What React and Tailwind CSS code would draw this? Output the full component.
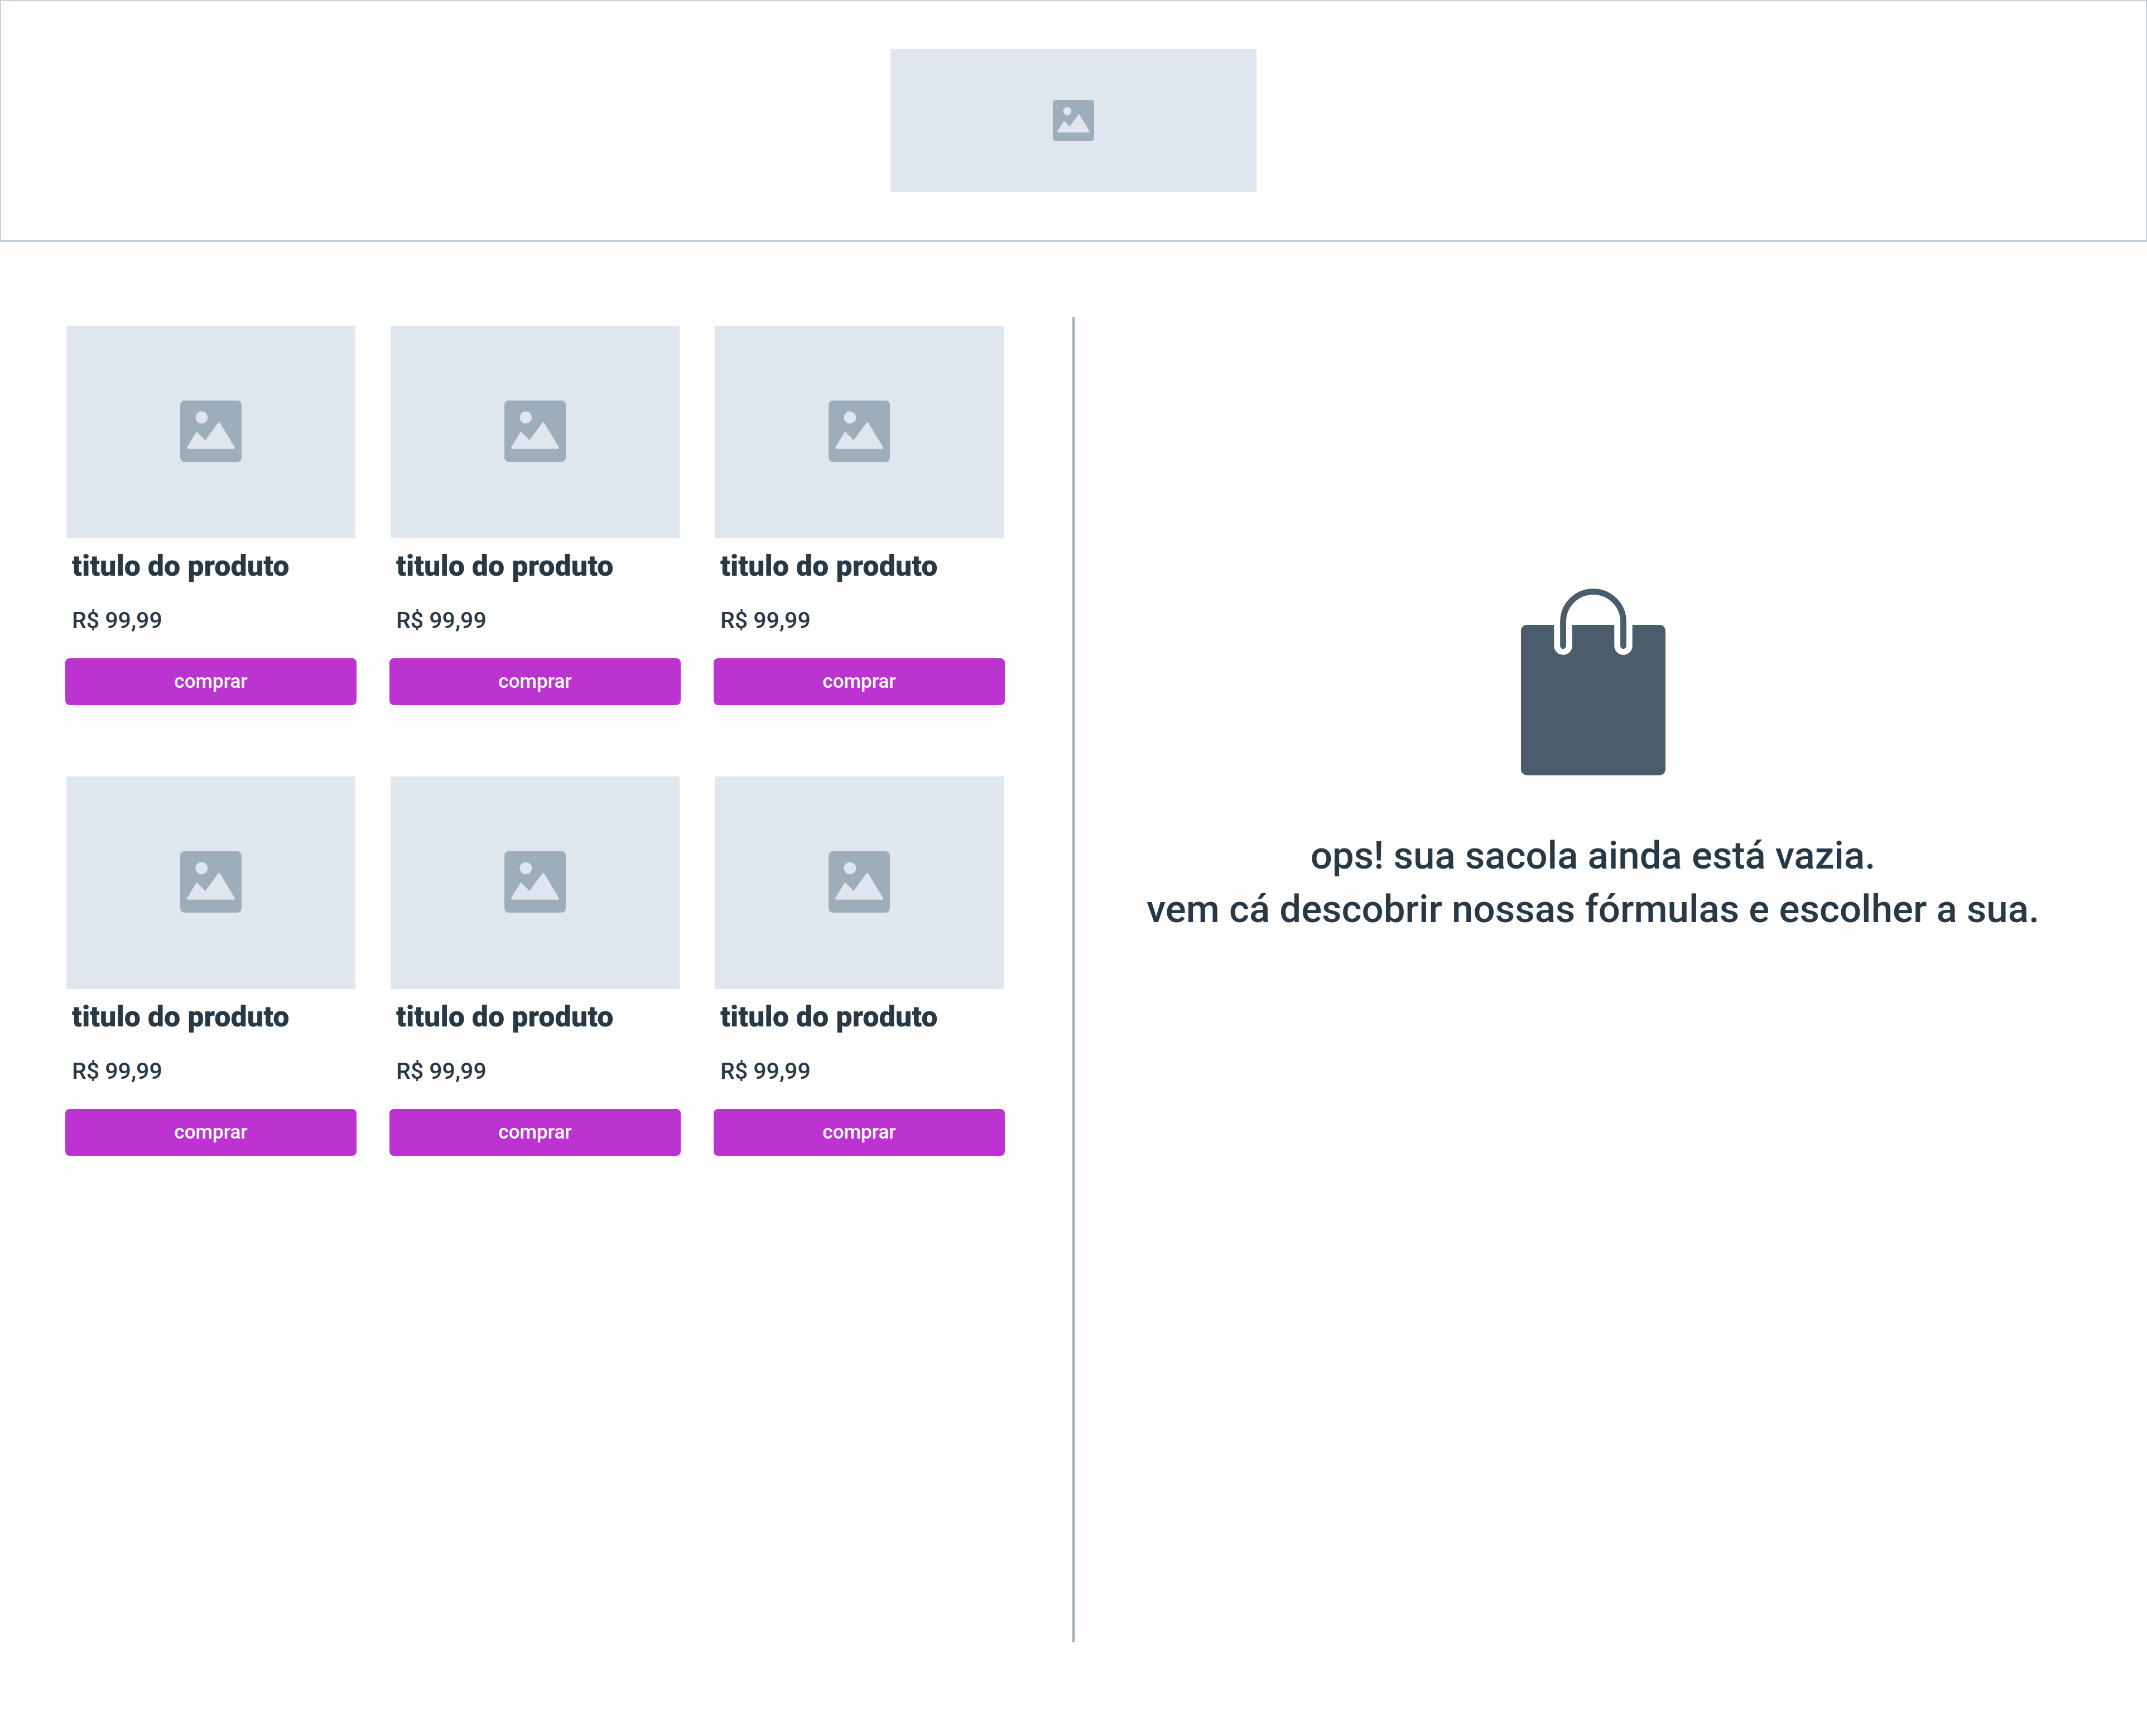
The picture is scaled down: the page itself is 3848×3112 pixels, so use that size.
const products = Array.from({ length: 6 }, (_, i) => ({
  id: i + 1,
  title: "titulo do produto",
  price: "R$ 99,99",
}));

function ImageIcon({ className }) {
  return (
    <svg viewBox="0 0 110 110" className={className} aria-hidden="true">
      <rect width="110" height="110" rx="8" fill="#9eadba" />
      <circle cx="38.4" cy="30.4" r="10.9" fill="#dfe6ee" />
      <path
        d="M14 84.8 29.8 58.8 45.3 74.2 69.6 41 96 84.8Z"
        fill="#dfe6ee"
        stroke="#dfe6ee"
        strokeWidth="4"
        strokeLinejoin="round"
      />
    </svg>
  );
}

function BagIcon({ className }) {
  return (
    <svg viewBox="0 0 24 31" className={className} aria-hidden="true">
      <path
        fill="#4b5c6b"
        d="M1 6H5.5V9.5A1.5 1.5 0 0 0 8.5 9.5V6H15.5V9.5A1.5 1.5 0 0 0 18.5 9.5V6H23A1 1 0 0 1 24 7V30A1 1 0 0 1 23 31H1A1 1 0 0 1 0 30V7A1 1 0 0 1 1 6Z"
      />
      <path d="M7 9.5V5.5A5 5 0 0 1 17 5.5V9.5" fill="none" stroke="#4b5c6b" strokeLinecap="round" />
    </svg>
  );
}

function ProductCard({ title, price }) {
  return (
    <li className="flex flex-col">
      <div className="mx-0.5 flex h-[381px] items-center justify-center bg-[#dfe6ee] pb-1">
        <ImageIcon className="size-[110px]" />
      </div>
      <h2 className="mt-5 px-3 text-[52px] leading-[60px] font-black">{title}</h2>
      <p className="mt-[43px] px-3 text-[41px] leading-[48px] font-medium">{price}</p>
      <button
        type="button"
        className="mt-11 h-[84px] rounded-lg bg-[#bd33d1] text-[35px] leading-[48px] font-medium text-white"
      >
        comprar
      </button>
    </li>
  );
}

export default function App() {
  return (
    <div className="flex min-h-screen flex-col bg-[#fefefe] font-['Roboto',sans-serif] text-[#293845]">
      <header className="flex justify-center border-2 border-b-4 border-[#c3cfd9] py-[86px]">
        <div className="flex h-64 w-[656px] items-center justify-center bg-[#dfe6ee]">
          <ImageIcon className="size-[74px]" />
        </div>
      </header>

      <main className="grid flex-1 grid-cols-[1fr_4px_1fr] pt-[134px] pb-[168px]">
        <section className="min-w-0 pt-4 pr-[121px] pl-[117px]" aria-label="Produtos">
          <ul className="grid grid-cols-3 gap-x-[59px] gap-y-32">
            {products.map((p) => (
              <ProductCard key={p.id} title={p.title} price={p.price} />
            ))}
          </ul>
        </section>

        <div className="bg-[#9eadba]" />

        <section className="flex min-w-0 flex-col items-center pt-[487px] pr-16" aria-label="Sacola">
          <BagIcon className="h-[335px] w-[259px]" />
          <p className="mt-24 text-center text-[69px] leading-[96px] font-medium">
            ops! sua sacola ainda está vazia.
            <br />
            vem cá descobrir nossas fórmulas e escolher a sua.
          </p>
        </section>
      </main>
    </div>
  );
}
